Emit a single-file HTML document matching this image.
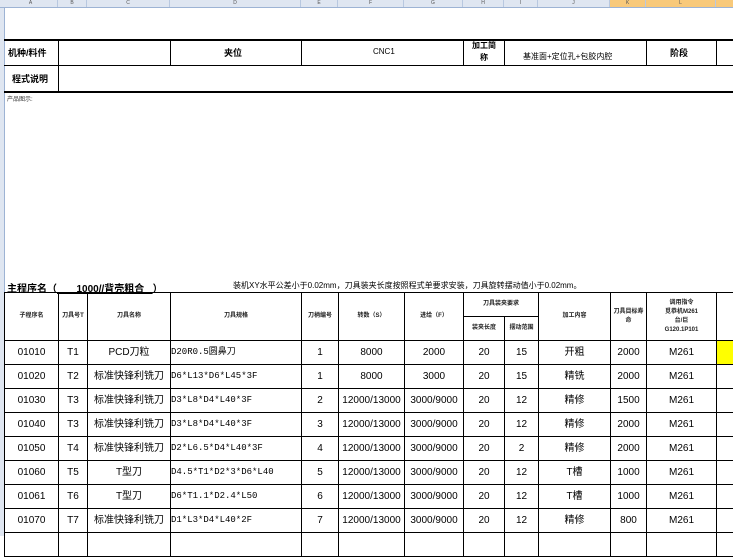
<!DOCTYPE html>
<html><head><meta charset="utf-8"><style>
body{margin:0;width:733px;height:536px;overflow:hidden;background:#fff;position:relative;font-family:"Liberation Sans","Noto Sans CJK SC",sans-serif;color:#000}
.hdr{position:absolute;top:0;left:0;width:733px;height:7px;background:#dfe6f1;border-bottom:1px solid #9db3d4;font-size:5px;color:#555}
.hdr span{position:absolute;top:0;text-align:center;border-right:1px solid #b8c8e0;height:7px;line-height:7px}
.side{position:absolute;top:8px;left:0;width:4px;height:528px;background:#dfe6f1;border-right:1px solid #9db3d4}
.a{position:absolute;font-size:9px;white-space:nowrap}
.l{position:absolute;background:#000}
table{position:absolute;left:4px;top:292px;border-collapse:collapse;table-layout:fixed;width:742px}
td{border:1px solid #000;text-align:center;font-size:10px;padding:0;overflow:hidden;white-space:nowrap;line-height:11px}
tr.d td{height:23px}
.s{font-size:6px;font-weight:bold;line-height:9px;white-space:normal;color:#222}
td.L{text-align:left;font-family:"Liberation Mono","Noto Sans CJK SC",monospace;font-size:9px}
</style></head><body>
<div class="hdr">
<span style="left:4px;width:53px">A</span><span style="left:58px;width:28px">B</span><span style="left:87px;width:82px">C</span><span style="left:170px;width:130px">D</span><span style="left:301px;width:36px">E</span><span style="left:338px;width:65px">F</span><span style="left:404px;width:58px">G</span><span style="left:463px;width:40px">H</span><span style="left:504px;width:33px">I</span><span style="left:538px;width:71px">J</span><span style="left:610px;width:35px;background:#f8c97a">K</span><span style="left:646px;width:69px;background:#f8c97a">L</span><span style="left:716px;width:17px;background:#f8c97a"></span>
</div>
<div class="side"></div>
<div class="l" style="left:4px;top:39px;width:729px;height:2px"></div>
<div class="l" style="left:4px;top:65px;width:729px;height:1px"></div>
<div class="l" style="left:4px;top:91px;width:729px;height:2px"></div>
<div class="l" style="left:58px;top:39px;width:1px;height:52px"></div>
<div class="l" style="left:170px;top:39px;width:1px;height:26px"></div>
<div class="l" style="left:301px;top:39px;width:1px;height:26px"></div>
<div class="l" style="left:463px;top:39px;width:1px;height:26px"></div>
<div class="l" style="left:504px;top:39px;width:1px;height:26px"></div>
<div class="l" style="left:646px;top:39px;width:1px;height:26px"></div>
<div class="l" style="left:716px;top:39px;width:1px;height:26px"></div>
<div class="a" style="left:8px;top:46px;font-weight:bold">机种/料件</div>
<div class="a" style="left:224px;top:46px;font-weight:bold">夹位</div>
<div class="a" style="left:373px;top:47px;font-size:8px">CNC1</div>
<div class="a" style="left:469px;top:40px;font-weight:bold;font-size:8px;line-height:12px;white-space:normal;width:30px;text-align:center">加工简称</div>
<div class="a" style="left:523px;top:51px;font-size:8px">基准面+定位孔+包胶内腔</div>
<div class="a" style="left:670px;top:46px;font-weight:bold">阶段</div>
<div class="a" style="left:12px;top:72px;font-weight:bold">程式说明</div>
<div class="a" style="left:7px;top:94px;font-size:6px;color:#333">产品图示:</div>
<div class="a" style="left:7px;top:280px;font-weight:bold;font-size:10px">主程序名（<span style="text-decoration:underline">&nbsp;&nbsp;&nbsp;&nbsp;&nbsp;&nbsp;&nbsp;1000//背壳粗合&nbsp;&nbsp;&nbsp;</span>）</div>
<div class="a" style="left:233px;top:280px;font-size:8px">装机XY水平公差小于0.02mm，刀具装夹长度按照程式单要求安装，刀具旋转摆动值小于0.02mm。</div>
<table>
<colgroup><col style="width:54px"><col style="width:29px"><col style="width:83px"><col style="width:131px"><col style="width:37px"><col style="width:66px"><col style="width:59px"><col style="width:41px"><col style="width:34px"><col style="width:72px"><col style="width:36px"><col style="width:70px"><col style="width:30px"></colgroup>
<tr style="height:24px"><td rowspan="2" class="s">子程序名</td><td rowspan="2" class="s">刀具号T</td><td rowspan="2" class="s">刀具名称</td><td rowspan="2" class="s">刀具规格</td><td rowspan="2" class="s">刀柄编号</td><td rowspan="2" class="s">转数（S）</td><td rowspan="2" class="s">进给（F）</td><td colspan="2" class="s">刀具装夹要求</td><td rowspan="2" class="s">加工内容</td><td rowspan="2" class="s">刀具目标寿命</td><td rowspan="2" class="s">调用指令<br>觅恭机M261<br>台/巨<br>G120.1P101</td><td rowspan="2" class="s"></td></tr>
<tr style="height:24px"><td class="s">装夹长度</td><td class="s">摆动范围</td></tr>
<tr class="d"><td>01010</td><td>T1</td><td>PCD刀粒</td><td class="L">D20R0.5圆鼻刀</td><td>1</td><td>8000</td><td>2000</td><td>20</td><td>15</td><td>开粗</td><td>2000</td><td>M261</td><td style="background:#ff0"></td></tr>
<tr class="d"><td>01020</td><td>T2</td><td>标准快锋利铣刀</td><td class="L">D6*L13*D6*L45*3F</td><td>1</td><td>8000</td><td>3000</td><td>20</td><td>15</td><td>精铣</td><td>2000</td><td>M261</td><td></td></tr>
<tr class="d"><td>01030</td><td>T3</td><td>标准快锋利铣刀</td><td class="L">D3*L8*D4*L40*3F</td><td>2</td><td>12000/13000</td><td>3000/9000</td><td>20</td><td>12</td><td>精修</td><td>1500</td><td>M261</td><td></td></tr>
<tr class="d"><td>01040</td><td>T3</td><td>标准快锋利铣刀</td><td class="L">D3*L8*D4*L40*3F</td><td>3</td><td>12000/13000</td><td>3000/9000</td><td>20</td><td>12</td><td>精修</td><td>2000</td><td>M261</td><td></td></tr>
<tr class="d"><td>01050</td><td>T4</td><td>标准快锋利铣刀</td><td class="L">D2*L6.5*D4*L40*3F</td><td>4</td><td>12000/13000</td><td>3000/9000</td><td>20</td><td>2</td><td>精修</td><td>2000</td><td>M261</td><td></td></tr>
<tr class="d"><td>01060</td><td>T5</td><td>T型刀</td><td class="L">D4.5*T1*D2*3*D6*L40</td><td>5</td><td>12000/13000</td><td>3000/9000</td><td>20</td><td>12</td><td>T槽</td><td>1000</td><td>M261</td><td></td></tr>
<tr class="d"><td>01061</td><td>T6</td><td>T型刀</td><td class="L">D6*T1.1*D2.4*L50</td><td>6</td><td>12000/13000</td><td>3000/9000</td><td>20</td><td>12</td><td>T槽</td><td>1000</td><td>M261</td><td></td></tr>
<tr class="d"><td>01070</td><td>T7</td><td>标准快锋利铣刀</td><td class="L">D1*L3*D4*L40*2F</td><td>7</td><td>12000/13000</td><td>3000/9000</td><td>20</td><td>12</td><td>精修</td><td>800</td><td>M261</td><td></td></tr>
<tr class="d"><td></td><td></td><td></td><td></td><td></td><td></td><td></td><td></td><td></td><td></td><td></td><td></td><td></td></tr>
</table>
</body></html>
